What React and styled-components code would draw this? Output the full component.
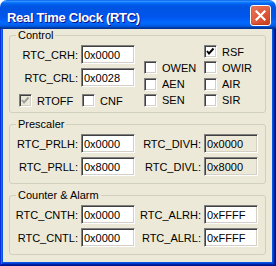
import React from 'react'
import styled, { createGlobalStyle } from 'styled-components'

const GlobalStyle = createGlobalStyle`
    html, body {
        margin: 0;
        padding: 0;
        background: #ffffff;
    }
    body {
        font-family: "Liberation Sans", Arial, sans-serif;
        font-size: 11px;
        color: #000000;
    }
`

const Window = styled.div`
    width: 276px;
    height: 266px;
    display: flex;
    flex-direction: column;
`

const TitleBar = styled.div`
    height: 29px;
    flex: none;
    box-sizing: border-box;
    display: flex;
    align-items: center;
    justify-content: space-between;
    padding: 2px 5px 0 7px;
    border-radius: 7px 7px 0 0;
    background: linear-gradient(180deg, #0058ee, #3593ff 4%, #288eff 6%, #127dff 8%, #036ffc 10%, #0262ee 14%, #0057e5 20%, #0054e3 24%, #0055eb 56%, #005bf5 66%, #026afe 76%, #0062ef 86%, #0052d6 92%, #0040ab 94%, #003092);
`

const Title = styled.span`
    padding-top: 3px;
    color: #ffffff;
    font-weight: bold;
    font-size: 13px;
    letter-spacing: -0.3px;
    text-shadow: 1px 1px #0f1089;
`

const CloseButton = styled.button`
    width: 21px;
    height: 21px;
    box-sizing: border-box;
    padding: 0;
    display: flex;
    align-items: center;
    justify-content: center;
    border: 1px solid #ffffff;
    border-radius: 3px;
    background: radial-gradient(circle at 85% 85%, #cc4625 0%, #e0583c 45%, #ea7a5e 100%);
    box-shadow: inset 0 -1px 2px #b8381a;
`

const Frame = styled.div`
    flex: 1;
    display: flex;
    padding: 0 4px 4px 3px;
    background: #0855dd;
    box-shadow: inset -1px -1px #00138c, inset 1px 0 #0831d9, inset -2px -2px #001ea0, inset 2px 0 #166aee, inset -3px -3px #003bda, inset 3px 0 #0855dd;
`

const Panel = styled.div`
    flex: 1;
    display: flex;
    flex-direction: column;
    gap: 5px;
    padding: 0 6px;
    background: #ece9d8;
`

const Group = styled.fieldset`
    margin: 0;
    padding: 3px 7px ${(props) => props.$bottom}px 2px;
    border: 1px solid #d0d0bf;
    border-radius: 3px;
    min-width: 0;
`

const Legend = styled.legend`
    margin-left: 4px;
    padding: 0 2px;
    line-height: 13px;
    font-size: 11px;
`

const FieldGrid = styled.div`
    display: grid;
    grid-template-columns: ${(props) => (props.$wide ? '69px 54px 69px 54px' : '69px 54px')};
    row-gap: 4px;
    align-items: center;
`

const Label = styled.span`
    text-align: right;
    padding-right: 3px;
    white-space: nowrap;
`

const TextBox = styled.input`
    width: 54px;
    height: 19px;
    box-sizing: border-box;
    margin: 0;
    padding: 0 0 0 2px;
    font-family: "Liberation Sans", Arial, sans-serif;
    font-size: 11px;
    color: #000000;
    background: ${(props) => (props.disabled ? '#ece9d8' : '#ffffff')};
    border-style: solid;
    border-width: 1px;
    border-color: #808080 #ffffff #ffffff #808080;
    box-shadow: inset 1px 1px #404040, inset -1px -1px #d4d0c8;
    outline: none;
`

const ControlLayout = styled.div`
    display: grid;
    grid-template-columns: 123px 123px;
    align-items: start;
`

const LeftStack = styled.div`
    display: flex;
    flex-direction: column;
    gap: 7px;
`

const CheckRow = styled.div`
    display: grid;
    grid-template-columns: 69px 54px;
`

const FlagGrid = styled.div`
    display: grid;
    grid-template-columns: 69px 54px;
    grid-auto-rows: 13px;
    row-gap: 3.33px;
`

const CheckItem = styled.label`
    display: flex;
    align-items: center;
    gap: 5px;
    height: 13px;
    padding-left: ${(props) => props.$indent || 0}px;
    grid-column: ${(props) => props.$col || 'auto'};
    white-space: nowrap;
`

const Box = styled.span`
    width: 13px;
    height: 13px;
    flex: none;
    box-sizing: border-box;
    display: flex;
    align-items: center;
    justify-content: center;
    background: ${(props) => (props.$disabled ? '#ece9d8' : '#ffffff')};
    border-style: solid;
    border-width: 1px;
    border-color: #808080 #ffffff #ffffff #808080;
    box-shadow: inset 1px 1px #404040, inset -1px -1px #d4d0c8;
`

function Check({ label, checked, disabled, indent, col }) {
    return (
        <CheckItem $indent={indent} $col={col}>
            <Box $disabled={disabled}>
                {checked && (
                    <svg width="9" height="9" viewBox="0 0 9 9">
                        <polyline points="1,4 3,6.5 7.5,1.5" fill="none" stroke={disabled ? '#a0a0a0' : '#000000'} strokeWidth="2" />
                    </svg>
                )}
            </Box>
            {label}
        </CheckItem>
    )
}

function Field({ label, value, disabled }) {
    return (
        <>
            <Label>{label}</Label>
            <TextBox defaultValue={value} readOnly disabled={disabled} />
        </>
    )
}

function App() {
    return (
        <Window>
            <GlobalStyle />
            <TitleBar>
                <Title>Real Time Clock (RTC)</Title>
                <CloseButton aria-label="Close">
                    <svg width="11" height="11" viewBox="0 0 11 11">
                        <path d="M1.5 1.5 L9.5 9.5 M9.5 1.5 L1.5 9.5" stroke="#ffffff" strokeWidth="2.2" strokeLinecap="square" />
                    </svg>
                </CloseButton>
            </TitleBar>
            <Frame>
                <Panel>
                    <Group $bottom={5}>
                        <Legend>Control</Legend>
                        <ControlLayout>
                            <LeftStack>
                                <FieldGrid>
                                    <Field label="RTC_CRH:" value="0x0000" />
                                    <Field label="RTC_CRL:" value="0x0028" />
                                </FieldGrid>
                                <CheckRow>
                                    <Check label="RTOFF" checked disabled indent={7} />
                                    <Check label="CNF" indent={1} />
                                </CheckRow>
                            </LeftStack>
                            <FlagGrid>
                                <Check label="RSF" checked col={2} />
                                <Check label="OWEN" indent={9} />
                                <Check label="OWIR" />
                                <Check label="AEN" indent={9} />
                                <Check label="AIR" />
                                <Check label="SEN" indent={9} />
                                <Check label="SIR" />
                            </FlagGrid>
                        </ControlLayout>
                    </Group>
                    <Group $bottom={7}>
                        <Legend>Prescaler</Legend>
                        <FieldGrid $wide>
                            <Field label="RTC_PRLH:" value="0x0000" />
                            <Field label="RTC_DIVH:" value="0x0000" disabled />
                            <Field label="RTC_PRLL:" value="0x8000" />
                            <Field label="RTC_DIVL:" value="0x8000" disabled />
                        </FieldGrid>
                    </Group>
                    <Group $bottom={7}>
                        <Legend>Counter &amp; Alarm</Legend>
                        <FieldGrid $wide>
                            <Field label="RTC_CNTH:" value="0x0000" />
                            <Field label="RTC_ALRH:" value="0xFFFF" />
                            <Field label="RTC_CNTL:" value="0x0000" />
                            <Field label="RTC_ALRL:" value="0xFFFF" />
                        </FieldGrid>
                    </Group>
                </Panel>
            </Frame>
        </Window>
    )
}

export default App
